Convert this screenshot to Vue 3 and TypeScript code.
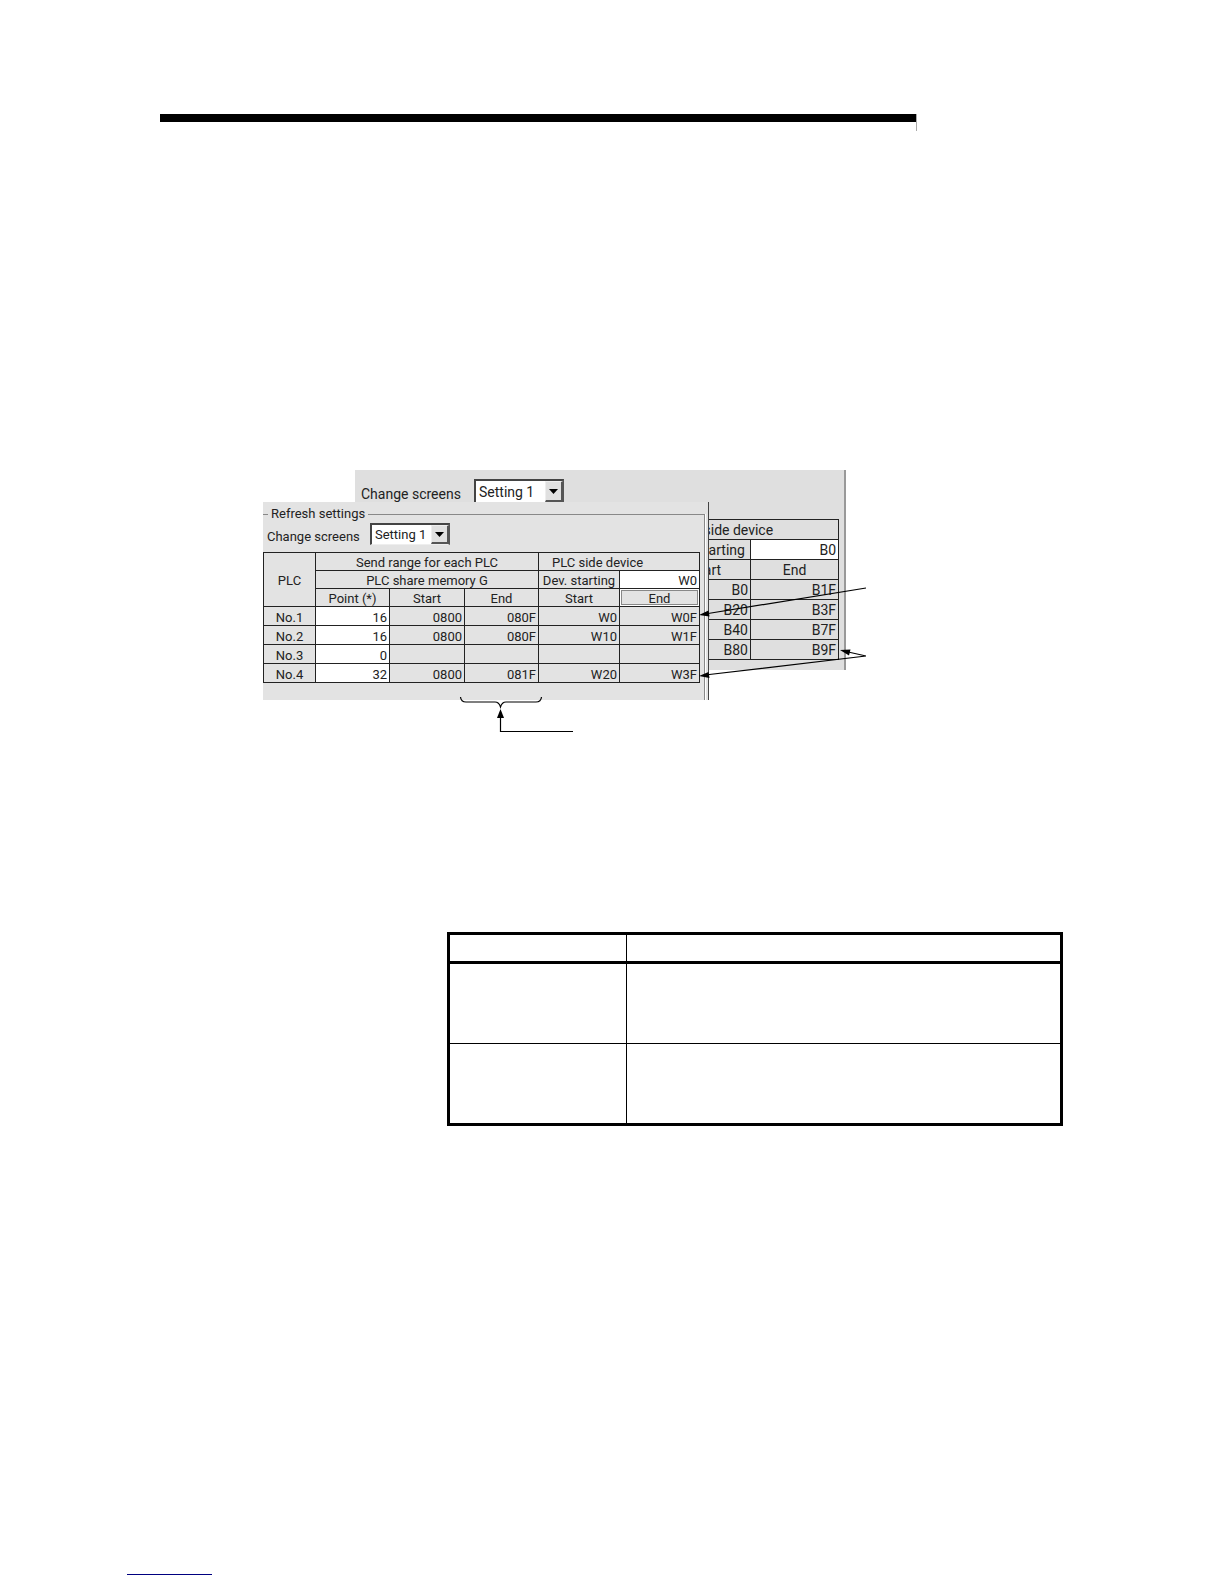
<script setup lang="ts">
import { ref } from 'vue'

interface Row {
  plc: string
  point: string
  start: string
  end: string
  devStart: string
  devEnd: string
}

const rows = ref<Row[]>([
  { plc: 'No.1', point: '16', start: '0800', end: '080F', devStart: 'W0', devEnd: 'W0F' },
  { plc: 'No.2', point: '16', start: '0800', end: '080F', devStart: 'W10', devEnd: 'W1F' },
  { plc: 'No.3', point: '0', start: '', end: '', devStart: '', devEnd: '' },
  { plc: 'No.4', point: '32', start: '0800', end: '081F', devStart: 'W20', devEnd: 'W3F' },
])

const backRows: string[][] = [
  ['B0', 'B1F'],
  ['B20', 'B3F'],
  ['B40', 'B7F'],
  ['B80', 'B9F'],
]

const frontDevice = ref('W0')
const backDevice = ref('B0')
</script>

<template>
  <main class="page">
    <div class="rule"></div>

    <figure class="canvas">
      <section class="win back">
        <div class="line">
          <label for="screen-back">Change screens</label>
          <span class="combo">
            <select id="screen-back"><option>Setting 1</option></select>
            <span class="drop"><svg viewBox="0 0 9 5"><path d="M0 0H9L4.5 5Z" /></svg></span>
          </span>
        </div>
        <table class="grid">
          <colgroup><col class="b1" /><col class="b2" /></colgroup>
          <thead>
            <tr><th colspan="2" class="side">PLC side device</th></tr>
            <tr>
              <th><label for="dev-back">Dev. starting</label></th>
              <td class="edit"><input id="dev-back" v-model="backDevice" type="text" /></td>
            </tr>
            <tr><th>Start</th><th>End</th></tr>
          </thead>
          <tbody>
            <tr v-for="r in backRows" :key="r[0]">
              <td>{{ r[0] }}</td>
              <td>{{ r[1] }}</td>
            </tr>
          </tbody>
        </table>
      </section>

      <section class="win front">
        <fieldset>
          <legend>Refresh settings</legend>
          <div class="line">
            <label for="screen-front">Change screens</label>
            <span class="combo">
              <select id="screen-front"><option>Setting 1</option></select>
              <span class="drop"><svg viewBox="0 0 9 5"><path d="M0 0H9L4.5 5Z" /></svg></span>
            </span>
          </div>
          <table class="grid">
            <colgroup>
              <col class="c1" /><col class="c2" /><col class="c3" /><col class="c2" /><col class="c4" /><col class="c5" />
            </colgroup>
            <thead>
              <tr>
                <th rowspan="3">PLC</th>
                <th colspan="3">Send range for each PLC</th>
                <th colspan="2" class="side">PLC side device</th>
              </tr>
              <tr>
                <th colspan="3">PLC share memory G</th>
                <th><label for="dev-front">Dev. starting</label></th>
                <td class="edit"><input id="dev-front" v-model="frontDevice" type="text" /></td>
              </tr>
              <tr>
                <th>Point (*)</th>
                <th>Start</th>
                <th>End</th>
                <th>Start</th>
                <th class="picked">End</th>
              </tr>
            </thead>
            <tbody>
              <tr v-for="r in rows" :key="r.plc">
                <th>{{ r.plc }}</th>
                <td class="edit"><input v-model="r.point" type="text" :aria-label="r.plc" /></td>
                <td>{{ r.start }}</td>
                <td>{{ r.end }}</td>
                <td>{{ r.devStart }}</td>
                <td>{{ r.devEnd }}</td>
              </tr>
            </tbody>
          </table>
        </fieldset>
      </section>

      <svg class="callouts" width="610" height="270" viewBox="0 0 610 270" aria-hidden="true">
        <g fill="none" stroke="#000" stroke-width="1.2">
          <path d="M603 118L442 144" />
          <path d="M603 186L583 181.500M603 186L442 205" />
          <path d="M197.500 227Q198 232 203 232H232Q236 232 237.500 237Q239 232 243 232H273Q278 232 278.500 227" />
          <path d="M237.500 246V261.500H310" />
        </g>
        <path d="M436 145L445.500 140.500L446.500 146.500Z" />
        <path d="M436 206L445.500 202L446.500 208Z" />
        <path d="M577 180L587.500 179.500L586 185.500Z" />
        <path d="M237.500 239L241 248H234Z" />
      </svg>
    </figure>

    <table class="sheet">
      <colgroup><col class="s1" /><col /></colgroup>
      <thead>
        <tr><th></th><th></th></tr>
      </thead>
      <tbody>
        <tr><td></td><td></td></tr>
        <tr><td></td><td></td></tr>
      </tbody>
    </table>

    <hr class="foot" />
  </main>
</template>

<style>
body {
  background: #fff;
}
</style>

<style scoped>
.page {
  padding-top: 114px;
  padding-bottom: 8px;
  font-family: Roboto, "Liberation Sans", sans-serif;
  font-size: 13px;
  color: #222;
}
.rule {
  height: 17px;
  margin: 0 307px 0 160px;
  border-right: 1px solid #aaa;
  background: linear-gradient(#000 8px, transparent 8px);
}
.canvas {
  position: relative;
  height: 270px;
  margin: 339px 0 0 263px;
}
.win {
  position: absolute;
  box-sizing: border-box;
}
.back {
  left: 92px;
  top: 0;
  width: 491px;
  height: 200px;
  overflow: hidden;
  padding: 9px 0 0;
  border-right: 2px solid #999;
  background: #dfdfdf;
  font-size: 14px;
}
.front {
  left: 0;
  top: 32px;
  width: 446px;
  height: 198px;
  padding-top: 5px;
  border-right: 1px solid #444;
  background: #e3e3e3;
}
fieldset {
  width: 442px;
  height: 193px;
  box-sizing: border-box;
  margin: 0;
  padding: 0;
  min-width: 0;
  border: 0 solid #888;
  border-top-width: 1px;
  border-right-width: 1px;
  box-shadow: 1px 0 #fff;
}
legend {
  margin-left: 5px;
  padding: 0 3px;
  line-height: 14px;
}
.line {
  display: flex;
  align-items: center;
}
.front .line {
  height: 22px;
  margin: 2px 0 7px 4px;
}
.back .line {
  height: 24px;
  margin: 0 0 16px 6px;
}
.front .line label {
  width: 103px;
  padding-top: 4px;
}
.back .line label {
  width: 113px;
  padding-top: 6px;
}
.combo {
  position: relative;
  display: flex;
  height: 100%;
  width: 80px;
}
.back .combo {
  width: 90px;
}
select {
  appearance: none;
  box-sizing: border-box;
  width: 100%;
  height: 100%;
  margin: 0;
  padding: 0 0 0 3px;
  border: 2px solid #444;
  border-right-color: #555;
  border-bottom: 1px solid #eee;
  border-radius: 0;
  background: #fff;
  color: inherit;
  font: inherit;
}
.drop {
  position: absolute;
  top: 2px;
  right: 1px;
  bottom: 1px;
  width: 18px;
  box-sizing: border-box;
  display: flex;
  align-items: center;
  justify-content: center;
  border: 1px solid #eee;
  border-right: 2px solid #555;
  border-bottom: 2px solid #555;
  background: #e0e0e0;
  pointer-events: none;
}
.drop svg {
  width: 9px;
  height: 5px;
}
.grid {
  table-layout: fixed;
  border-collapse: collapse;
  width: 437px;
}
.back .grid {
  width: 178px;
  margin-left: 306px;
}
.c1 { width: 52px; }
.c2 { width: 74px; }
.c3 { width: 75px; }
.c4 { width: 81px; }
.c5 { width: 80px; }
.b1 { width: 89px; }
.b2 { width: 88px; }
.grid th,
.grid td {
  height: 19px;
  box-sizing: border-box;
  padding: 2px 2px 0;
  border: 1px solid #222;
  line-height: 15px;
  font-weight: 400;
  text-align: right;
  white-space: nowrap;
}
.grid th {
  text-align: center;
}
.grid thead th,
.grid thead td {
  height: 18px;
}
.back .grid th,
.back .grid td {
  height: 20px;
}
.grid .side {
  padding-left: 13px;
  text-align: left;
}
.grid .edit {
  background: #fff;
}
.edit input {
  display: block;
  box-sizing: border-box;
  width: 100%;
  height: 15px;
  margin: 0;
  padding: 0;
  border: 0;
  background: transparent;
  color: inherit;
  font: inherit;
  text-align: right;
}
.grid .picked {
  box-shadow: inset 0 0 0 1px #fff, inset 0 0 0 2px #888;
}
.callouts {
  position: absolute;
  left: 0;
  top: 0;
}
.sheet {
  width: calc(100% - 608px);
  margin: 192px 161px 0 447px;
  table-layout: fixed;
  border-collapse: collapse;
  border: 3px solid #000;
}
.s1 { width: 178px; }
.sheet th,
.sheet td {
  height: 81px;
  box-sizing: border-box;
  padding: 0;
  border: 1px solid #000;
}
.sheet th {
  height: 29px;
  border-bottom: 3px solid #000;
}
.sheet th:first-child,
.sheet td:first-child {
  border-left: 3px solid #000;
}
.foot {
  width: 85px;
  height: 1px;
  margin: 448px 0 0 127px;
  border: 0;
  background: #000080;
}
</style>
